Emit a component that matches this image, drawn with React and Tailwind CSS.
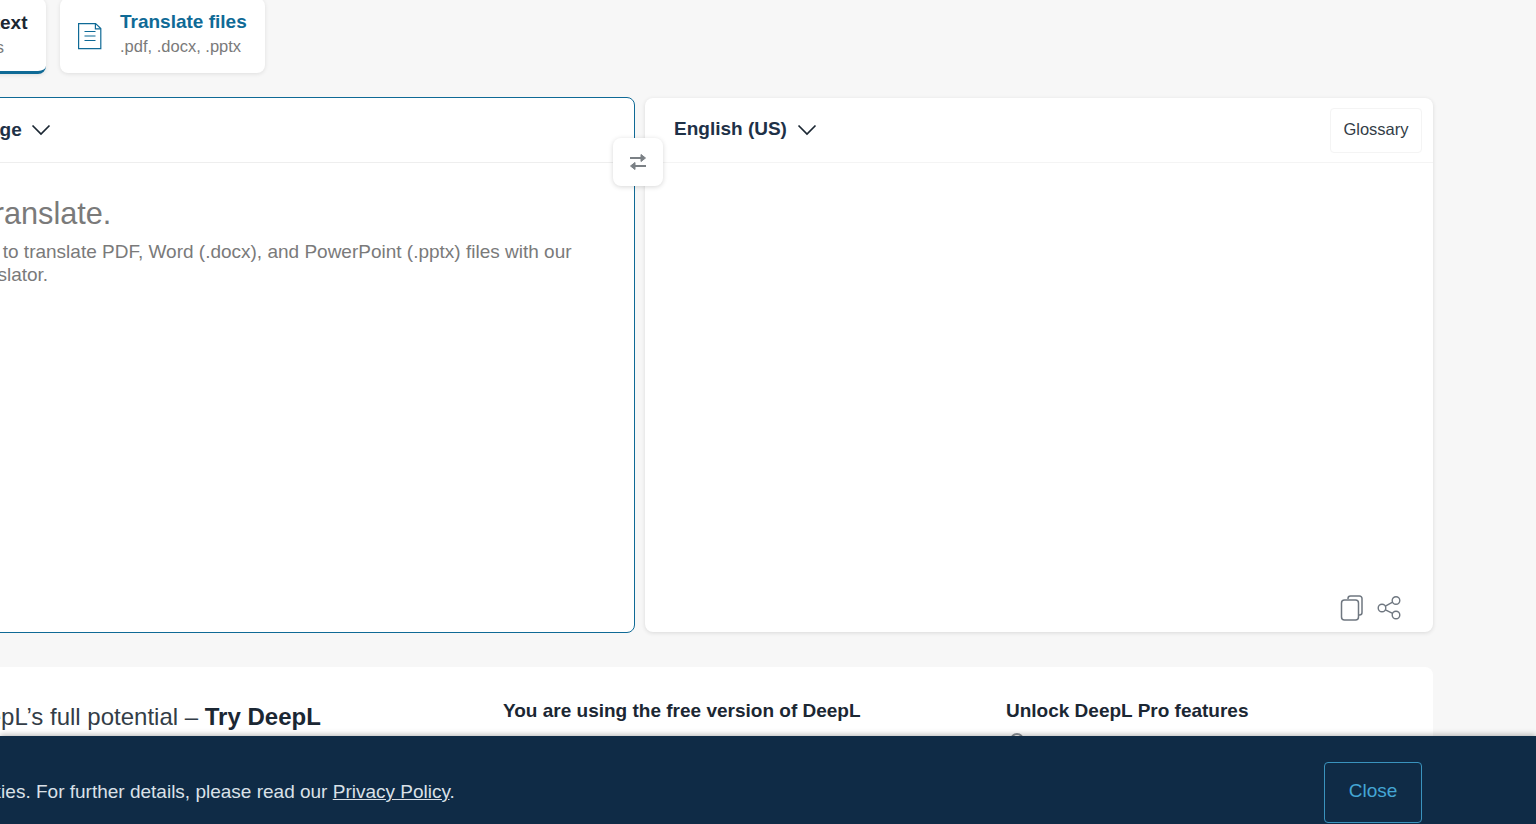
import React from "react";

const font = { fontFamily: '"Liberation Sans", Arial, sans-serif' };

function Chevron() {
  return (
    <svg width="20" height="12" viewBox="0 0 20 12" fill="none" stroke="#1b2733" strokeWidth="1.7">
      <path d="M1.5 1.5l8.5 8.5 8.5-8.5" />
    </svg>
  );
}

function DocIcon() {
  return (
    <svg width="26" height="28" viewBox="0 0 26 28" fill="none" stroke="#0f6a96" strokeWidth="1.2">
      <path d="M1.6 1.6h17l5.2 5v20H1.6z" />
      <path d="M18.4 1.6v5.2h5.4" />
      <path d="M7.5 9.5h11M7.5 14h11M7.5 18.5h11" />
    </svg>
  );
}

function SwapIcon() {
  return (
    <svg width="18" height="20" viewBox="0 0 18 20" fill="#7b8085" stroke="#7b8085" strokeWidth="2">
      <path d="M1 6h12" />
      <path d="M12 2.5l4.5 3.5-4.5 3.5z" strokeWidth="1" />
      <path d="M17 14H5" />
      <path d="M6 10.5L1.5 14 6 17.5z" strokeWidth="1" />
    </svg>
  );
}

function CopyIcon() {
  return (
    <svg width="24" height="26" viewBox="0 0 24 26" fill="none" stroke="#6f7780" strokeWidth="1.5">
      <path d="M8 4V3.5A2.5 2.5 0 0 1 10.5 1h9A2.5 2.5 0 0 1 22 3.5v14a2.5 2.5 0 0 1-2.5 2.5H19" />
      <rect x="1.5" y="5" width="17" height="20" rx="3" />
    </svg>
  );
}

function ShareIcon() {
  return (
    <svg width="26" height="26" viewBox="0 0 26 26" fill="none" stroke="#6f7780" strokeWidth="1.4">
      <circle cx="5" cy="13" r="3.8" />
      <circle cx="19" cy="5.5" r="3.8" />
      <circle cx="19" cy="20" r="3.8" />
      <path d="M8.4 11.2l7.2-4M8.4 14.8l7.2 3.6" />
    </svg>
  );
}

export default function App() {
  return (
    <div style={font} className="relative h-[824px] w-full overflow-hidden bg-[#f7f7f7]">
      <div className="-ml-[153px] -mt-[2px] w-[1586px]">
        {/* tabs */}
        <div className="flex gap-[14px]">
          <div className="flex h-[76px] w-[199px] items-center rounded-lg border-b-[3px] border-[#0f6a96] bg-white pb-[2px] pl-[58px] shadow-[0_1px_4px_rgba(0,0,0,0.1)]">
            <div>
              <div className="text-[19px] font-bold leading-[24px] text-[#1b2733]">Translate text</div>
              <div className="mt-[2px] text-[16.5px] leading-[20px] text-[#7a7a7a]">31 languages</div>
            </div>
          </div>
          <div className="flex h-[75px] w-[205px] items-center gap-[17px] rounded-lg bg-white pl-[17px] shadow-[0_1px_4px_rgba(0,0,0,0.1)]">
            <DocIcon />
            <div className="pb-[5px]">
              <div className="text-[19px] font-bold leading-[24px] text-[#0f6a96]">Translate files</div>
              <div className="mt-[2px] text-[16.5px] leading-[20px] text-[#7a7a7a]">.pdf, .docx, .pptx</div>
            </div>
          </div>
        </div>

        {/* translator */}
        <div className="relative mt-[23px] flex gap-[10px]">
          <div className="h-[536px] w-[788px] rounded-lg border border-[#0f6a96] bg-white">
            <div className="flex h-[65px] items-center gap-[9px] border-b border-[#eeeeee] pl-[27px]">
              <span className="text-[19px] font-bold text-[#1e3147]">Detect language</span>
              <Chevron />
            </div>
            <div className="pl-[28px] pr-[60px] pt-[33px]">
              <div className="text-[30.7px] leading-[36px] text-[#7a7a7a]">Type to translate.</div>
              <div className="mt-[8px] text-[19px] leading-[23px] text-[#7a7a7a]">
                Drag and drop to translate PDF, Word (.docx), and PowerPoint (.pptx) files with our document translator.
              </div>
            </div>
          </div>
          <div className="mt-[1px] flex h-[534px] w-[788px] flex-col rounded-lg bg-white shadow-[0_1px_4px_rgba(0,0,0,0.12)]">
            <div className="flex h-[65px] items-center gap-[10px] border-b border-[#f4f4f4] pb-[1px] pl-[29px] pr-[11px]">
              <span className="text-[19px] font-bold text-[#1e3147]">English (US)</span>
              <Chevron />
              <button className="ml-auto mt-[2px] h-[45px] w-[92px] rounded border border-[#f4f4f4] pb-[2px] text-[16.5px] text-[#333d47]">Glossary</button>
            </div>
            <div className="mt-auto flex justify-end gap-[13px] pb-[11px] pr-[30px]">
              <CopyIcon />
              <ShareIcon />
            </div>
          </div>
          <button className="absolute left-[766px] top-[41px] flex h-[48px] w-[50px] items-center justify-center rounded-lg bg-white shadow-[0_1px_5px_rgba(0,0,0,0.16)]">
            <SwapIcon />
          </button>
        </div>

        {/* upsell card */}
        <div className="mt-[34px] grid h-[200px] grid-cols-[628px_503px_1fr] rounded-lg bg-white pl-[28px] pt-[32px]">
          <div className="pl-[2px] pr-[150px] text-[24px] leading-[36px] text-[#333d47]">
            Unlock DeepL’s full potential – <b className="font-bold text-[#1b2733]">Try DeepL Pro</b>
          </div>
          <div className="text-[19px] font-bold leading-[24px] text-[#1b2733]">You are using the free version of DeepL</div>
          <div className="text-[19px] font-bold leading-[24px] text-[#1b2733]">
            Unlock DeepL Pro features
            <div className="ml-[4px] mt-[10px] h-[14px] w-[14px] rounded-full border-2 border-[#8a9096]" />
          </div>
        </div>
      </div>

      {/* cookie banner */}
      <div className="absolute inset-x-0 bottom-0 flex h-[88px] items-start justify-between bg-[#0f2b46] pr-[114px] pt-[26px] shadow-[0_-1px_6px_rgba(0,0,0,0.3)]">
        <div className="-ml-[145px] h-[60px] text-[19px] leading-[59px] text-[#dae1e8]">
          DeepL uses cookies. For further details, please read our <span className="underline">Privacy Policy</span>.
        </div>
        <button className="h-[61px] w-[98px] rounded border border-[#3a93bd] pb-[3px] text-[19px] text-[#44a6d4]">Close</button>
      </div>
    </div>
  );
}
